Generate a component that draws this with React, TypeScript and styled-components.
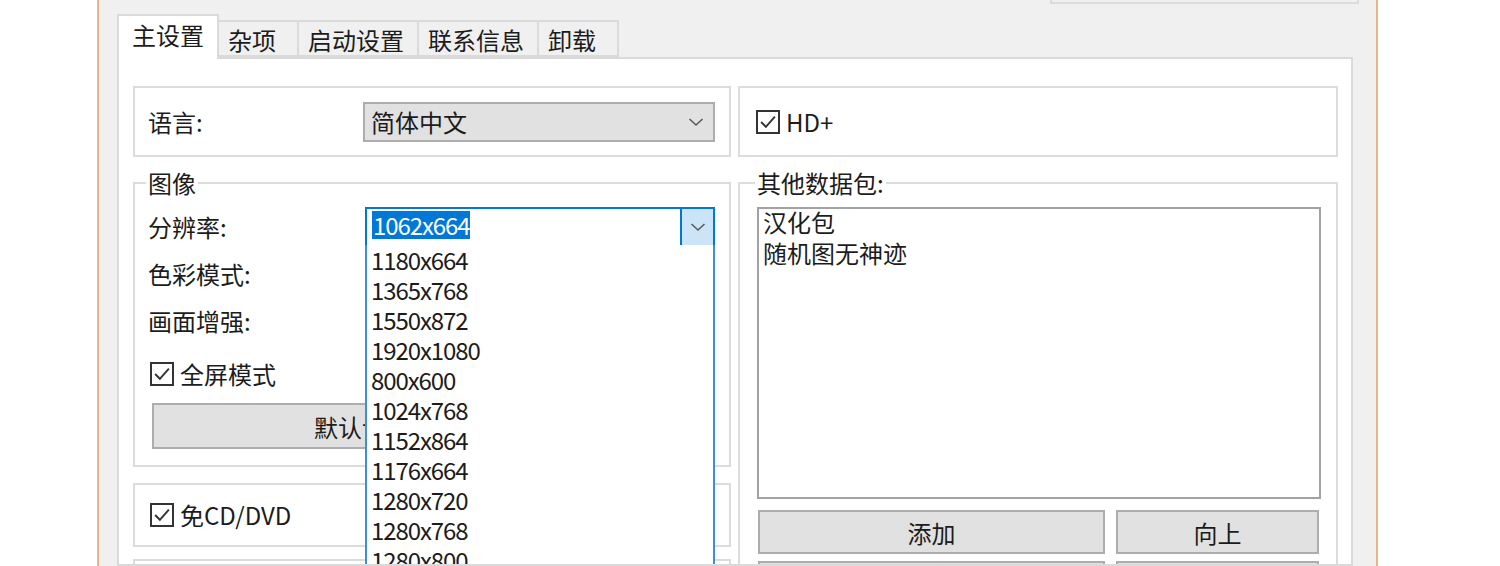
import React from "react";
import styled, { createGlobalStyle } from "styled-components";

const GlobalStyle = createGlobalStyle`
  html, body { margin: 0; padding: 0; background: #ffffff; }
  body {
    font-family: "Noto Sans CJK SC", "Noto Sans", sans-serif;
    color: #1c1c1c;
    overflow: hidden;
  }
  * { box-sizing: border-box; }
`;

const Page = styled.div`
  height: 566px;
  overflow: hidden;
  padding-left: 97px;
  display: flex;
`;

const Window = styled.div`
  width: 1281px;
  height: 566px;
  border-left: 2px solid #e8b38f;
  border-right: 2px solid #e8b38f;
  background: #f0f0f0;
  display: flex;
  flex-direction: column;
  overflow: hidden;
`;

const TopBar = styled.div`
  height: 14px;
  flex-shrink: 0;
  display: flex;
  justify-content: flex-end;
  padding-right: 17px;
`;

const TopField = styled.div`
  width: 309px;
  height: 4px;
  border: 2px solid #dcdcdc;
  border-top: none;
`;

const TabStrip = styled.div`
  display: flex;
  align-items: flex-end;
  padding-left: 18px;
  height: 43px;
  flex-shrink: 0;
  position: relative;
  z-index: 2;
`;

const Tab = styled.div<{ $active?: boolean; $w: number }>`
  width: ${(p) => p.$w}px;
  height: ${(p) => (p.$active ? 45 : 37)}px;
  margin-bottom: ${(p) => (p.$active ? -2 : 0)}px;
  padding-left: ${(p) => (p.$active ? 13 : 9)}px;
  padding-top: ${(p) => (p.$active ? 2 : 1)}px;
  background: ${(p) => (p.$active ? "#ffffff" : "#f0f0f0")};
  border: 2px solid #dadada;
  border-bottom: ${(p) => (p.$active ? "none" : "2px solid #dadada")};
  border-left-width: ${(p) => (p.$active ? 2 : 0)}px;
  font-size: 24px;
  line-height: 34px;
  white-space: nowrap;
`;

const Panel = styled.div`
  width: 1236px;
  margin-left: 18px;
  flex: 1;
  min-height: 0;
  overflow: hidden;
  background: #ffffff;
  border: 2px solid #dadada;
  padding: 27px 13px 0 14px;
  display: flex;
  gap: 7px;
`;

const Column = styled.div<{ $w: number }>`
  width: ${(p) => p.$w}px;
  flex-shrink: 0;
  display: flex;
  flex-direction: column;
`;

const Box = styled.div<{ $h: number; $pl: number; $mt?: number }>`
  height: ${(p) => p.$h}px;
  margin-top: ${(p) => p.$mt ?? 0}px;
  flex-shrink: 0;
  border: 2px solid #dcdcdc;
  padding-left: ${(p) => p.$pl}px;
  display: flex;
  align-items: center;
`;

const Group = styled.fieldset<{ $pl: number; $pr: number; $mt: number }>`
  margin: ${(p) => p.$mt}px 0 0 0;
  border: 2px solid #dcdcdc;
  padding: 9px ${(p) => p.$pr}px 16px ${(p) => p.$pl}px;
  min-width: 0;
  flex-shrink: 0;
  display: flex;
  flex-direction: column;
`;

const Legend = styled.legend`
  padding: 0 2px;
  margin-left: -2px;
  font-size: 24px;
  line-height: 30px;
`;

const Label = styled.div<{ $w: number }>`
  width: ${(p) => p.$w}px;
  flex-shrink: 0;
  font-size: 24px;
  line-height: 30px;
`;

const Row = styled.div<{ $mt?: number }>`
  display: flex;
  align-items: center;
  height: 40px;
  flex-shrink: 0;
  margin-top: ${(p) => p.$mt ?? 0}px;
`;

const Combo = styled.div<{ $w: number }>`
  position: relative;
  width: ${(p) => p.$w}px;
  height: 40px;
  background: #e1e1e1;
  border: 2px solid #adadad;
  display: flex;
  align-items: center;
  padding-left: 6px;
  font-size: 24px;
`;

const ComboText = styled.span`
  flex: 1;
`;

const Chevron = styled.svg<{ $mr?: number }>`
  width: 16px;
  height: 10px;
  margin-right: ${(p) => p.$mr ?? 9}px;
  flex-shrink: 0;
`;

const FocusCombo = styled.div`
  position: relative;
  width: 350px;
  height: 40px;
  background: #ffffff;
  border: 2px solid #0078d7;
  display: flex;
  align-items: center;
  font-size: 24px;
`;

const EditArea = styled.div`
  flex: 1;
  padding: 0 0 4px 5px;
  display: flex;
  align-items: center;
`;

const Selected = styled.span`
  background: #0078d7;
  color: #ffffff;
  line-height: 28px;
  padding: 0 1px;
  letter-spacing: -1.1px;
`;

const DropButton = styled.div`
  width: 33px;
  align-self: stretch;
  background: #cce4f7;
  border-left: 2px solid #0078d7;
  display: flex;
  align-items: center;
  justify-content: center;
`;

const DropList = styled.div`
  position: absolute;
  top: 100%;
  left: -2px;
  right: -2px;
  height: 420px;
  background: #ffffff;
  border: 2px solid #3d8fda;
  border-top: none;
  padding: 0 0 0 4px;
  z-index: 10;
`;

const DropItem = styled.div`
  font-size: 24px;
  line-height: 30px;
  height: 30px;
  letter-spacing: -1.1px;
`;

const CheckRow = styled.label<{ $ml?: number; $mt?: number }>`
  display: flex;
  align-items: center;
  gap: 6px;
  flex-shrink: 0;
  margin-left: ${(p) => p.$ml ?? 0}px;
  margin-top: ${(p) => p.$mt ?? 0}px;
  font-size: 24px;
  line-height: 30px;
  height: 30px;
`;

const CheckBoxBox = styled.span`
  width: 24px;
  height: 24px;
  border: 2px solid #333333;
  background: #ffffff;
  display: flex;
  align-items: center;
  justify-content: center;
  flex-shrink: 0;
`;

const Button = styled.div<{ $w: number; $h: number; $ml?: number }>`
  width: ${(p) => p.$w}px;
  height: ${(p) => p.$h}px;
  margin-left: ${(p) => p.$ml ?? 0}px;
  flex-shrink: 0;
  background: #e1e1e1;
  border: 2px solid #adadad;
  display: flex;
  align-items: center;
  justify-content: center;
  font-size: 24px;
`;

const ButtonRow = styled.div<{ $mt: number }>`
  display: flex;
  flex-shrink: 0;
  gap: 11px;
  margin-top: ${(p) => p.$mt}px;
  margin-left: 1px;
`;

const ListBox = styled.div`
  height: 292px;
  flex-shrink: 0;
  border: 2px solid #a2a2a2;
  background: #ffffff;
  padding: 0 0 0 4px;
  display: flex;
  flex-direction: column;
`;

const ListItems = styled.div`
  margin-top: -3px;
`;

const ListItem = styled.div`
  font-size: 24px;
  line-height: 31px;
`;

const ChevronIcon = ({ mr }: { mr?: number }) => (
  <Chevron viewBox="0 0 16 10" $mr={mr}>
    <polyline points="1.5,2 8,8 14.5,2" fill="none" stroke="#5a5a5a" strokeWidth="1.6" />
  </Chevron>
);

const CheckBox = ({ label, ml, mt }: { label: string; ml?: number; mt?: number }) => (
  <CheckRow $ml={ml} $mt={mt}>
    <CheckBoxBox>
      <svg width="18" height="18" viewBox="0 0 17 17">
        <polyline points="2,8.5 6.5,13 15,3.5" fill="none" stroke="#333" strokeWidth="1.8" />
      </svg>
    </CheckBoxBox>
    {label}
  </CheckRow>
);

const tabs = [
  { t: "主设置", w: 102, active: true },
  { t: "杂项", w: 80 },
  { t: "启动设置", w: 120 },
  { t: "联系信息", w: 120 },
  { t: "卸载", w: 80 },
];

const resolutions = [
  "1180x664",
  "1365x768",
  "1550x872",
  "1920x1080",
  "800x600",
  "1024x768",
  "1152x864",
  "1176x664",
  "1280x720",
  "1280x768",
  "1280x800",
  "1280x960",
  "1280x1024",
];

export default function App() {
  return (
    <>
      <GlobalStyle />
      <Page>
        <Window>
          <TopBar>
            <TopField />
          </TopBar>
          <TabStrip>
            {tabs.map((t) => (
              <Tab key={t.t} $active={t.active} $w={t.w}>
                {t.t}
              </Tab>
            ))}
          </TabStrip>
          <Panel>
            <Column $w={598}>
              <Box $h={71} $pl={13}>
                <Label $w={215}>语言:</Label>
                <Combo $w={352}>
                  <ComboText>简体中文</ComboText>
                  <ChevronIcon />
                </Combo>
              </Box>
              <Group $pl={13} $pr={14} $mt={11}>
                <Legend>图像</Legend>
                <Row>
                  <Label $w={217}>分辨率:</Label>
                  <FocusCombo>
                    <EditArea>
                      <Selected>1062x664</Selected>
                    </EditArea>
                    <DropButton>
                      <ChevronIcon mr={0} />
                    </DropButton>
                    <DropList>
                      {resolutions.map((r) => (
                        <DropItem key={r}>{r}</DropItem>
                      ))}
                    </DropList>
                  </FocusCombo>
                </Row>
                <Row $mt={7}>
                  <Label $w={217}>色彩模式:</Label>
                  <Combo $w={350} />
                </Row>
                <Row $mt={7}>
                  <Label $w={217}>画面增强:</Label>
                  <Combo $w={350} />
                </Row>
                <CheckBox label="全屏模式" ml={2} mt={18} />
                <ButtonRow $mt={14}>
                  <Button $w={420} $h={46} $ml={3}>
                    默认设置
                  </Button>
                </ButtonRow>
              </Group>
              <Box $h={64} $pl={15} $mt={16}>
                <CheckBox label="免CD/DVD" />
              </Box>
              <Box $h={64} $pl={15} $mt={12}>
                <CheckBox label="窗口化" />
              </Box>
            </Column>
            <Column $w={600}>
              <Box $h={71} $pl={16}>
                <CheckBox label="HD+" />
              </Box>
              <Group $pl={17} $pr={15} $mt={11}>
                <Legend>其他数据包:</Legend>
                <ListBox>
                  <ListItems>
                    <ListItem>汉化包</ListItem>
                    <ListItem>随机图无神迹</ListItem>
                  </ListItems>
                </ListBox>
                <ButtonRow $mt={11}>
                  <Button $w={347} $h={44}>添加</Button>
                  <Button $w={203} $h={44}>向上</Button>
                </ButtonRow>
                <ButtonRow $mt={7}>
                  <Button $w={347} $h={44}>删除</Button>
                  <Button $w={203} $h={44}>向下</Button>
                </ButtonRow>
              </Group>
            </Column>
          </Panel>
        </Window>
      </Page>
    </>
  );
}
